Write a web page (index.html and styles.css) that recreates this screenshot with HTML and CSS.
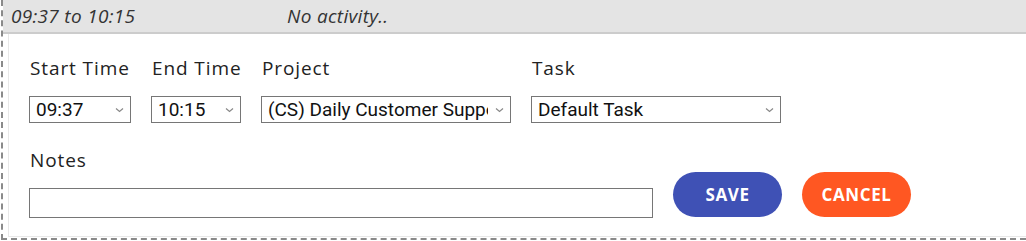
FILE: index.html
```html
<!DOCTYPE html>
<html lang="en">
<head>
    <meta charset="UTF-8">
    <title>Time entry</title>
    <link rel="stylesheet" href="styles.css">
</head>
<body>
<!-- Bloco de um registo de tempo -->
<div class="entry">
    <div class="entry-head">
        <span class="entry-range">09:37 to 10:15</span>
        <span class="entry-activity">No activity..</span>
    </div>

    <div class="entry-body">
        <div class="fields">
            <div class="field">
                <label for="start">Start Time</label>
                <select id="start" class="pick">
                    <option>09:37</option>
                </select>
            </div>
            <div class="field">
                <label for="end">End Time</label>
                <select id="end" class="pick">
                    <option>10:15</option>
                </select>
            </div>
            <div class="field">
                <label for="project">Project</label>
                <select id="project" class="pick">
                    <option>(CS) Daily Customer Support</option>
                </select>
            </div>
            <div class="field">
                <label for="task">Task</label>
                <select id="task" class="pick">
                    <option>Default Task</option>
                </select>
            </div>
        </div>

        <div class="notes-row">
            <div class="field">
                <label for="notes">Notes</label>
                <input id="notes" class="notes" type="text">
            </div>
            <button class="btn btn-save">Save</button>
            <button class="btn btn-cancel">Cancel</button>
        </div>
    </div>
</div>
</body>
</html>
```

FILE: styles.css
```css
body {
    margin: 0;
    padding: 0;
    font-family: "Open Sans", Arial, sans-serif;
    background-color: #FFFFFF;
    color: #222222;
}

/* Caixa com contorno tracejado */
.entry {
    margin-left: 1px;
    height: 240px;
    box-sizing: border-box;
    border-left: 2px dashed #8a8a8a;
    border-bottom: 2px dashed #8a8a8a;
}

.entry-head {
    display: flex;
    height: 32px;
    align-items: center;
    background-color: #e4e4e4;
    border-bottom: 2px solid #cccccc;
    font-style: italic;
    font-size: 19px;
    letter-spacing: 0.3px;
    color: #333333;
}

.entry-range {
    width: 276px;
    padding-left: 8px;
}

.entry-body {
    margin-left: 5px;
    height: 203px;
    box-sizing: border-box;
    border-left: 1px solid #e8e8e8;
    border-bottom: 1px solid #e8e8e8;
    padding: 22px 0 0 20px;
}

/* Colunas fixas: horas estreitas, projeto e tarefa largos */
.fields {
    display: grid;
    grid-template-columns: 102px 90px 250px 250px;
    gap: 20px;
}

.field {
    display: flex;
    flex-direction: column;
}

.field label {
    font-size: 19px;
    letter-spacing: 0.9px;
    line-height: 24px;
    white-space: nowrap;
    margin-bottom: 16px;
    padding-left: 1px;
}

/* Seta fina em cinzento, como no original */
.pick {
    appearance: none;
    width: 100%;
    height: 27px;
    font-family: Roboto, Arial, sans-serif;
    font-size: 19px;
    color: #111111;
    background-color: #FFFFFF;
    background-image: url("data:image/svg+xml,%3Csvg xmlns='http://www.w3.org/2000/svg' width='9' height='6' viewBox='0 0 9 6'%3E%3Cpath d='M1 1.5 L4.5 4.5 L8 1.5' fill='none' stroke='%23888' stroke-width='1.2'/%3E%3C/svg%3E");
    background-repeat: no-repeat;
    background-position: right 6px center;
    border: 1px solid #767676;
    border-radius: 0;
    padding: 0 22px 0 6px;
}

.notes-row {
    display: flex;
    align-items: flex-end;
    gap: 20px;
    margin-top: 25px;
}

.notes-row .field label {
    margin-bottom: 16px;
}

.notes {
    width: 624px;
    height: 30px;
    box-sizing: border-box;
    border: 1px solid #767676;
    margin: 0;
}

.btn {
    width: 109px;
    height: 45px;
    margin-bottom: 1px;
    border: none;
    border-radius: 23px;
    color: #FFFFFF;
    font-family: "Open Sans", Arial, sans-serif;
    font-weight: bold;
    font-size: 17px;
    letter-spacing: 0.6px;
    text-transform: uppercase;
    cursor: pointer;
}

.btn-save {
    background-color: #3f51b5;
}

.btn-cancel {
    background-color: #ff5722;
}
```
